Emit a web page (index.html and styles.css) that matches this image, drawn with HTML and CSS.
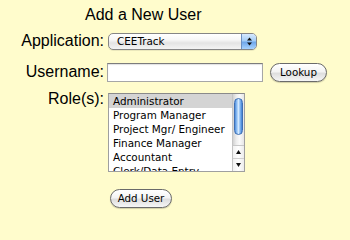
FILE: index.html
```html
<!DOCTYPE html>
<html>
<head>
<meta charset="utf-8">
<title>Add a New User</title>
<link rel="stylesheet" href="styles.css">
</head>
<body>
<form class="form">
  <h1 class="title">Add a New User</h1>

  <div class="row row-app">
    <label class="label">Application:</label>
    <div class="popup">
      <span class="popup-text">CEETrack</span>
      <span class="popup-stepper">
        <svg width="5" height="9" viewBox="0 0 5 9"><path d="M2.5 0.5 L5 3.5 L0 3.5 Z" fill="#111"/><path d="M0 5.5 L5 5.5 L2.5 8.5 Z" fill="#111"/></svg>
      </span>
    </div>
  </div>

  <div class="row row-user">
    <label class="label">Username:</label>
    <input class="textfield" type="text">
    <button type="button" class="btn btn-lookup">Lookup</button>
  </div>

  <div class="row row-roles">
    <label class="label">Role(s):</label>
    <div class="listbox">
      <ul class="list-items">
        <li class="item selected">Administrator</li>
        <li class="item">Program Manager</li>
        <li class="item">Project Mgr/ Engineer</li>
        <li class="item">Finance Manager</li>
        <li class="item">Accountant</li>
        <li class="item">Clerk/Data Entry</li>
      </ul>
      <div class="scrollbar">
        <div class="track"><div class="thumb"></div></div>
        <div class="arrows">
          <div class="arrow"><svg width="5" height="4" viewBox="0 0 5 4"><path d="M2.5 0 L5 4 L0 4 Z" fill="#111"/></svg></div>
          <div class="arrow arrow-down"><svg width="5" height="4" viewBox="0 0 5 4"><path d="M0 0 L5 0 L2.5 4 Z" fill="#111"/></svg></div>
        </div>
      </div>
    </div>
  </div>

  <div class="row row-submit">
    <button type="button" class="btn btn-add">Add User</button>
  </div>
</form>
</body>
</html>
```

FILE: styles.css
```css
html, body {
  margin: 0;
  padding: 0;
}
body {
  background: #fffccc;
  width: 350px;
  height: 218px;
  overflow: hidden;
  font-family: "Liberation Sans", Arial, sans-serif;
  color: #000;
}
.form {
  margin: 0;
  padding: 0;
}
.title {
  margin: 0;
  padding: 5.5px 0 0 85px;
  font-size: 16px;
  font-weight: normal;
  line-height: 18px;
}
.row {
  display: flex;
  align-items: flex-start;
}
.label {
  width: 104px;
  flex: none;
  text-align: right;
  font-size: 16px;
  line-height: 18px;
  margin-right: 4px;
}
.row-app { margin-top: 8px; }
.row-user { margin-top: 13px; }
.row-roles { margin-top: 8px; }
.row-submit { margin-top: 17px; padding-left: 110px; }

/* popup */
.popup {
  box-sizing: border-box;
  margin-top: 1.5px;
  width: 149px;
  height: 17px;
  border: 1px solid #858585;
  border-radius: 5px;
  background: linear-gradient(to bottom, #ffffff 0%, #f6f6f6 40%, #e4e4e4 60%, #f4f4f4 100%);
  display: flex;
  overflow: hidden;
  box-shadow: 0 1px 0 rgba(0,0,0,0.08);
}
.popup-text {
  flex: 1;
  padding-left: 8px;
  font-family: "DejaVu Sans", sans-serif;
  font-size: 10.4px;
  line-height: 15px;
}
.popup-stepper {
  width: 14px;
  flex: none;
  border-left: 1px solid #6c8fc0;
  background: linear-gradient(to bottom, #d6e9ff 0%, #a5cdf6 45%, #6fa7ea 55%, #a8d3ff 100%);
  display: flex;
  align-items: center;
  justify-content: center;
}

/* text field */
.textfield {
  box-sizing: border-box;
  width: 156px;
  height: 19px;
  margin: 0 0 0 -1px;
  border: 1px solid #a6a6a6;
  border-top-color: #7c7c7c;
  background: #fff;
  box-shadow: inset 0 1px 1px rgba(0,0,0,0.12);
  padding: 0 3px;
  font-family: "DejaVu Sans", sans-serif;
  font-size: 10.4px;
}

/* buttons */
.btn {
  box-sizing: border-box;
  height: 19px;
  padding: 0;
  border: 1px solid #6a6a6a;
  border-radius: 10px;
  background: linear-gradient(to bottom, #ffffff 0%, #f4f4f4 45%, #dedede 55%, #f6f6f6 100%);
  font-family: "DejaVu Sans", sans-serif;
  font-size: 10.3px;
  line-height: 17px;
  color: #000;
  box-shadow: 0 1px 1px rgba(0,0,0,0.18);
}
.btn-lookup {
  width: 57px;
  margin-left: 7px;
}
.btn-add {
  width: 62px;
}

/* listbox */
.listbox {
  box-sizing: border-box;
  margin-top: 3px;
  width: 137px;
  height: 79px;
  border: 1px solid #9f9f9f;
  border-top-color: #8a8a8a;
  background: #fff;
  display: flex;
  overflow: hidden;
}
.list-items {
  flex: 1;
  list-style: none;
  margin: 0;
  padding: 0;
  overflow: hidden;
  font-family: "DejaVu Sans", sans-serif;
  font-size: 10.4px;
  line-height: 14px;
}
.item {
  padding-left: 4px;
  white-space: nowrap;
  height: 14px;
}
.item.selected {
  background: #d4d4d4;
}
.scrollbar {
  width: 11px;
  flex: none;
  display: flex;
  flex-direction: column;
  border-left: 1px solid #c4c4c4;
}
.track {
  flex: 1;
  padding-top: 4px;
  background: linear-gradient(to right, #d2d2d2 0%, #ededed 30%, #fafafa 60%, #e6e6e6 100%);
}
.thumb {
  box-sizing: border-box;
  width: 9px;
  height: 37px;
  margin: 0 auto;
  border: 1px solid #3e6fb3;
  border-radius: 5px;
  background: linear-gradient(to right, #4f8ddd 0%, #9cc8f6 30%, #d3e9ff 50%, #7fb3ee 75%, #3f7fd4 100%);
}
.arrows {
  height: 25px;
  display: flex;
  flex-direction: column;
  border-top: 1px solid #c8c8c8;
  background: linear-gradient(to right, #f2f2f2, #ffffff 50%, #ececec);
}
.arrow {
  flex: 1;
  display: flex;
  align-items: center;
  justify-content: center;
}
.arrow-down {
  border-top: 1px solid #d0d0d0;
}
```
